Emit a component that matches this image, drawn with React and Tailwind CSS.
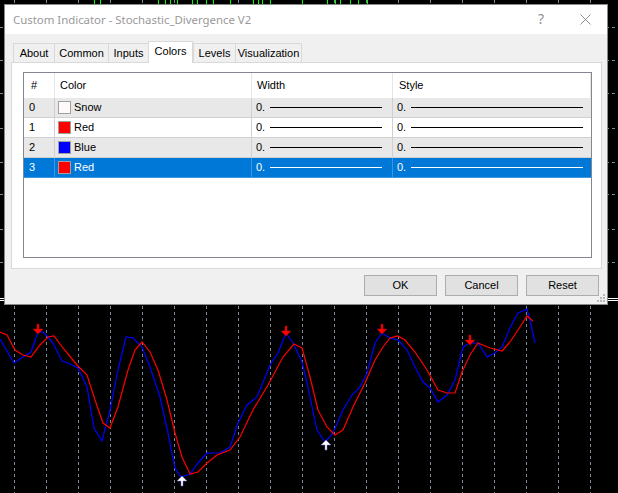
import React from "react";

const gridX = Array.from({ length: 19 }, (_, k) => 14 + 32 * k);
const hY = [27, 60, 93, 128, 162, 194, 229, 262];
const greenX = [94, 100, 158, 165, 170, 177, 192, 197, 206, 213, 230, 253, 258, 262, 270, 302, 327, 335, 340, 350, 358, 367];

const blue =
  "0,339 14,363 23,357 31,352 38,332 43,332 48,337 53,343 62,361 68,363 78,368 87,387 94,428 102,441 110,410 118,370 126,337 133,338 142,347 150,367 160,397 168,433 175,468 181,477 190,474 198,463 207,453 220,453 230,447 238,423 247,405 257,397 270,365 278,353 286,333 293,343 302,362 307,383 317,430 325,442 333,433 343,410 352,395 360,387 367,373 375,343 382,333 390,338 398,340 407,350 415,367 423,382 430,388 438,402 447,395 455,380 463,347 470,343 478,343 487,357 495,353 502,347 510,328 518,313 527,309 530,320 535,343";
const red =
  "0,332 7,335 15,350 23,355 31,357 40,345 48,337 54,336 63,348 77,365 87,375 95,400 103,423 110,428 118,407 128,370 135,350 142,342 150,352 158,370 167,400 175,433 182,457 190,474 198,472 207,463 217,455 230,450 240,437 253,410 268,385 283,357 294,344 302,348 310,377 318,410 327,427 335,435 343,430 353,407 365,383 375,360 383,347 390,338 398,336 405,340 415,352 427,370 438,390 447,393 455,393 462,372 470,355 478,343 490,348 502,351 510,342 520,327 527,316 533,321";

function downArrow(cx, bottom) {
  const t = bottom - 10;
  return `M${cx - 1} ${t} h2 v5 h4 L${cx} ${bottom} L${cx - 5} ${t + 5} h4 z`;
}
function upArrow(cx, top) {
  const b = top + 10;
  return `M${cx - 1} ${b} h2 v-5 h4 L${cx} ${top} L${cx - 5} ${b - 5} h4 z`;
}

function Chart() {
  return (
    <svg className="absolute inset-0" width="618" height="493" viewBox="0 0 618 493">
      <rect width="618" height="493" fill="#000" />
      {gridX.map((x) => (
        <line key={x} x1={x + 0.5} y1="0" x2={x + 0.5} y2="493" stroke="#778899" strokeDasharray="3 3" />
      ))}
      {hY.map((y) => (
        <line key={y} x1="0" y1={y + 0.5} x2="618" y2={y + 0.5} stroke="#778899" strokeDasharray="3 3" />
      ))}
      {greenX.map((x) => (
        <line key={x} x1={x + 0.5} y1="0" x2={x + 0.5} y2="4" stroke="#00ff00" />
      ))}
      <line x1="0" y1="298.5" x2="618" y2="298.5" stroke="#fff" />
      <line x1="0" y1="300.5" x2="618" y2="300.5" stroke="#fff" />
      <polyline points={blue} fill="none" stroke="#0000ff" strokeWidth="1.2" />
      <polyline points={red} fill="none" stroke="#ff0000" strokeWidth="1.2" />
      {[
        [38, 334],
        [286, 336],
        [382, 334],
        [470, 345],
      ].map(([x, y]) => (
        <path key={x} d={downArrow(x, y)} fill="#ff0000" stroke="#b00000" strokeWidth="0.5" />
      ))}
      {[
        [182, 476],
        [326, 440],
      ].map(([x, y]) => (
        <path key={x} d={upArrow(x, y)} fill="#ffffff" stroke="#6a6ad0" strokeWidth="0.5" />
      ))}
    </svg>
  );
}

const tabs = [
  { label: "About", w: 41 },
  { label: "Common", w: 54 },
  { label: "Inputs", w: 40 },
  { label: "Colors", w: 45, active: true },
  { label: "Levels", w: 42 },
  { label: "Visualization", w: 67 },
];

const rows = [
  { i: "0", name: "Snow", color: "#fffafa", bg: "bg-[#e8e8e8]" },
  { i: "1", name: "Red", color: "#ff0000", bg: "bg-white" },
  { i: "2", name: "Blue", color: "#0000ff", bg: "bg-[#e8e8e8]" },
  { i: "3", name: "Red", color: "#ff0000", bg: "bg-[#0078d7]", sel: true },
];

function Row({ r }) {
  const sep = r.sel ? "border-[#3d96df]" : "border-[#d0d0d0]";
  const txt = r.sel ? "text-white" : "text-black";
  const line = r.sel ? "bg-white" : "bg-black";
  return (
    <div className={`flex h-[20px] border-b ${sep} ${r.bg} ${txt}`}>
      <div className={`w-[31px] border-r ${sep} pl-[5px] flex items-center`}>{r.i}</div>
      <div className={`w-[197px] border-r ${sep} pl-[3px] flex items-center`}>
        <div className="w-[13px] h-[13px] border border-[#a0a0a0]" style={{ backgroundColor: r.color }} />
        <span className="ml-[3px]">{r.name}</span>
      </div>
      <div className={`w-[141px] border-r ${sep} pl-[4px] flex items-center`}>
        <span>0.</span>
        <div className={`ml-[5px] w-[112px] h-[1px] ${line}`} />
      </div>
      <div className={`w-[198px] pl-[4px] flex items-center`}>
        <span>0.</span>
        <div className={`ml-[5px] w-[172px] h-[1px] ${line}`} />
      </div>
    </div>
  );
}

export default function App() {
  return (
    <div className="relative w-[618px] h-[493px] overflow-hidden bg-black font-['Liberation_Sans',Arial,sans-serif] text-[11px]">
      <Chart />
      <div className="relative ml-[4px] mt-[4px] w-[604px] h-[301px] border border-[#8a8a8a] bg-[#f0f0f0] flex flex-col">
        {/* title bar */}
        <div className="h-[29px] bg-white flex items-center pl-[8px] relative">
          <span className="font-['Noto_Sans',sans-serif] text-[11.4px] text-[#999999] leading-none">
            Custom Indicator - Stochastic_Divergence V2
          </span>
          <span className="absolute left-[533px] top-[7px] font-['Noto_Sans',sans-serif] text-[14px] text-[#8f8f8f] leading-none">?</span>
          <svg className="absolute left-[575px] top-[9px]" width="11" height="11" viewBox="0 0 11 11">
            <path d="M0.5 0.5 L10.5 10.5 M10.5 0.5 L0.5 10.5" stroke="#8f8f8f" strokeWidth="1" />
          </svg>
        </div>
        {/* tabs */}
        <div className="mt-[7px] ml-[8px] h-[21px] flex items-end relative z-10">
          {tabs.map((t, idx) =>
            t.active ? (
              <div
                key={t.label}
                className="h-[22px] -mb-[1px] border border-b-0 border-[#d9d9d9] bg-white flex items-center justify-center text-black pb-[2px]"
                style={{ width: t.w }}
              >
                {t.label}
              </div>
            ) : (
              <div
                key={t.label}
                className={`h-[19px] border-t border-l ${idx === tabs.length - 1 ? "border-r" : ""} border-[#d9d9d9] bg-[#f0f0f0] flex items-center justify-center text-black`}
                style={{ width: t.w }}
              >
                {t.label}
              </div>
            )
          )}
        </div>
        {/* panel */}
        <div className="ml-[6px] w-[591px] h-[207px] border border-[#d9d9d9] bg-white pl-[11px] pt-[9px]">
          <div className="w-[569px] h-[186px] border border-[#828790] bg-white">
            <div className="flex h-[25px] text-black">
              <div className="w-[31px] border-r border-[#e5e5e5] pl-[7px] flex items-center">#</div>
              <div className="w-[197px] border-r border-[#e5e5e5] pl-[5px] flex items-center">Color</div>
              <div className="w-[141px] border-r border-[#e5e5e5] pl-[5px] flex items-center">Width</div>
              <div className="w-[198px] border-r border-[#e5e5e5] pl-[6px] flex items-center">Style</div>
            </div>
            {rows.map((r, i) => (
              <Row key={i} r={r} />
            ))}
          </div>
        </div>
        {/* buttons */}
        <div className="mt-[6px] flex justify-end gap-[8px] pr-[8px]">
          {["OK", "Cancel", "Reset"].map((b) => (
            <div
              key={b}
              className="w-[73px] h-[21px] border border-[#adadad] bg-[#e1e1e1] flex items-center justify-center text-black"
            >
              {b}
            </div>
          ))}
        </div>
        <svg className="absolute right-[1px] bottom-[1px]" width="9" height="9" viewBox="0 0 9 9">
          {[
            [6, 0],
            [3, 3],
            [6, 3],
            [0, 6],
            [3, 6],
            [6, 6],
          ].map(([x, y]) => (
            <rect key={`${x}-${y}`} x={x} y={y} width="2" height="2" fill="#b8b8b8" />
          ))}
        </svg>
      </div>
    </div>
  );
}
